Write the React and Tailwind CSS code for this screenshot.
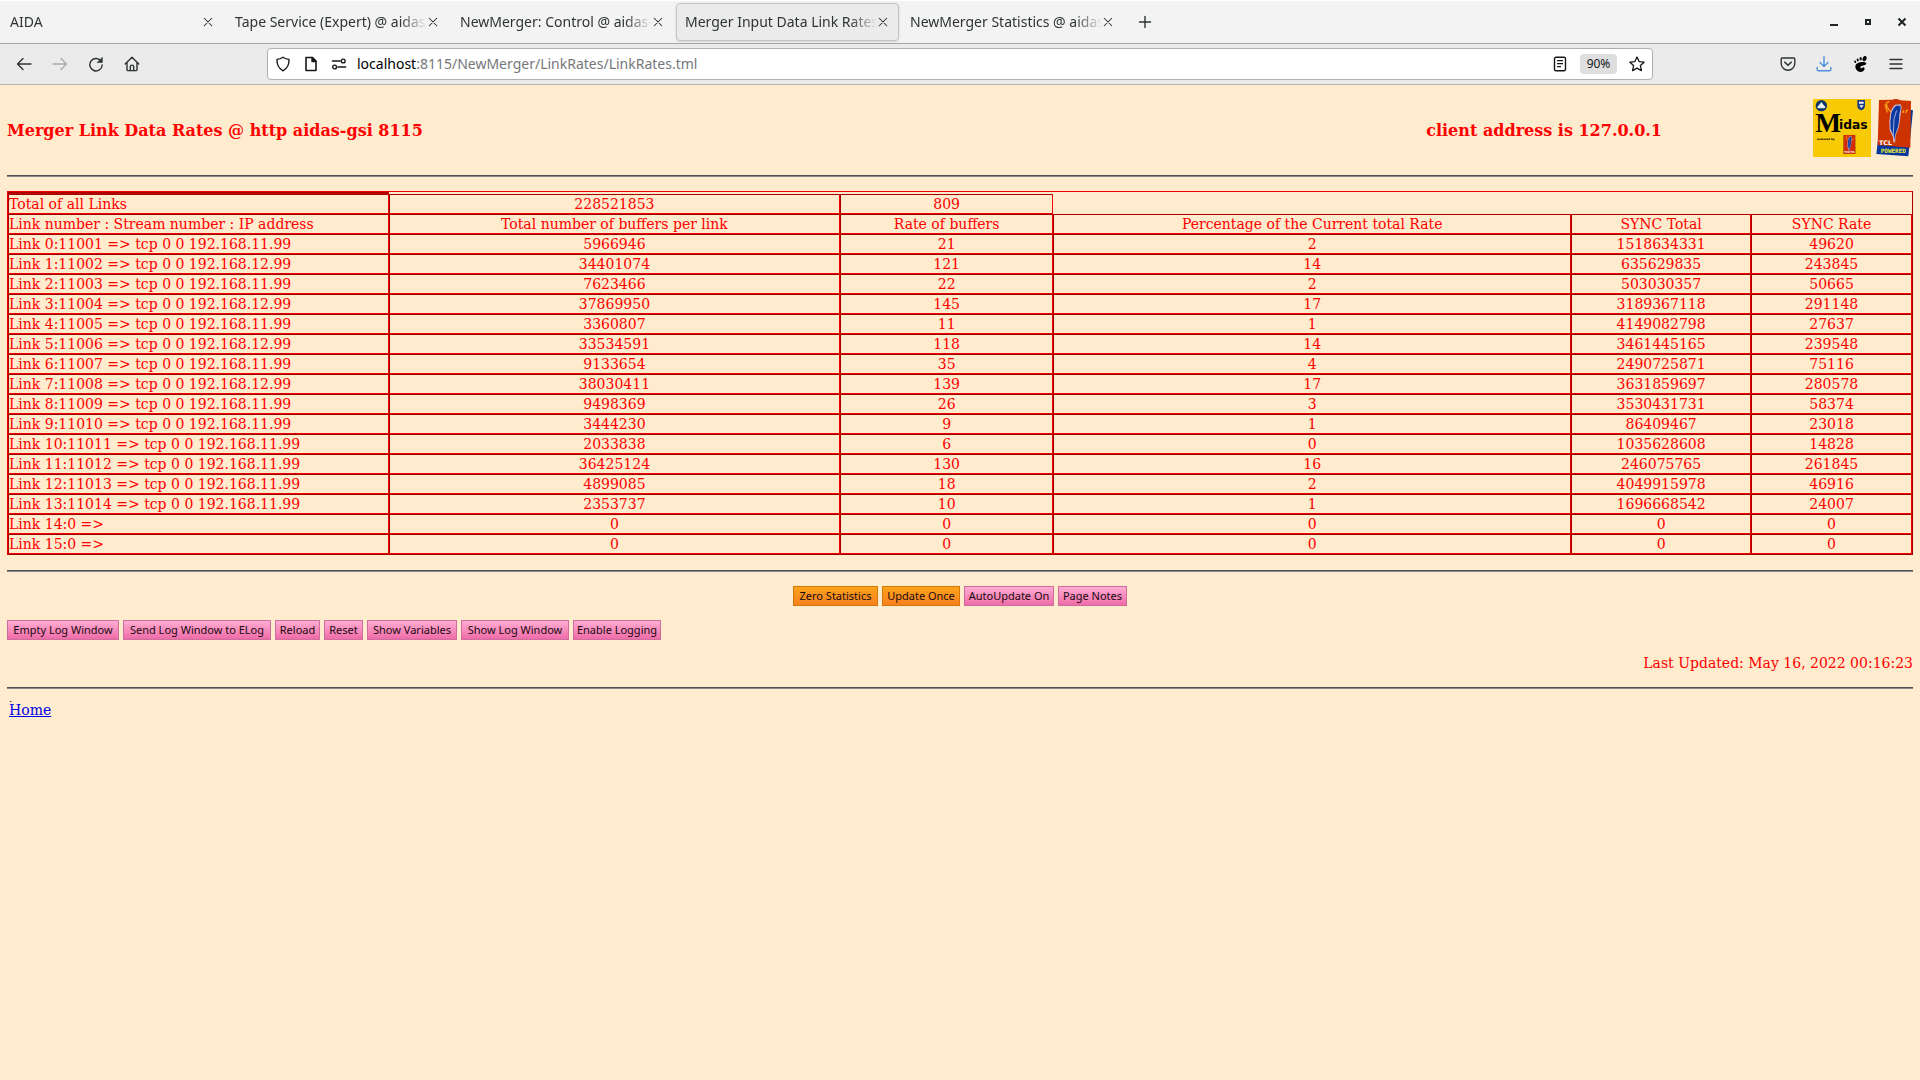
import React from "react";

const tabs = [
  "AIDA",
  "Tape Service (Expert) @ aidas",
  "NewMerger: Control @ aidas-",
  "Merger Input Data Link Rates",
  "NewMerger Statistics @ aidas",
];
const ACTIVE_TAB = 3;

const links = [
  ["Link 0:11001 => tcp 0 0 192.168.11.99", 5966946, 21, 2, 1518634331, 49620],
  ["Link 1:11002 => tcp 0 0 192.168.12.99", 34401074, 121, 14, 635629835, 243845],
  ["Link 2:11003 => tcp 0 0 192.168.11.99", 7623466, 22, 2, 503030357, 50665],
  ["Link 3:11004 => tcp 0 0 192.168.12.99", 37869950, 145, 17, 3189367118, 291148],
  ["Link 4:11005 => tcp 0 0 192.168.11.99", 3360807, 11, 1, 4149082798, 27637],
  ["Link 5:11006 => tcp 0 0 192.168.12.99", 33534591, 118, 14, 3461445165, 239548],
  ["Link 6:11007 => tcp 0 0 192.168.11.99", 9133654, 35, 4, 2490725871, 75116],
  ["Link 7:11008 => tcp 0 0 192.168.12.99", 38030411, 139, 17, 3631859697, 280578],
  ["Link 8:11009 => tcp 0 0 192.168.11.99", 9498369, 26, 3, 3530431731, 58374],
  ["Link 9:11010 => tcp 0 0 192.168.11.99", 3444230, 9, 1, 86409467, 23018],
  ["Link 10:11011 => tcp 0 0 192.168.11.99", 2033838, 6, 0, 1035628608, 14828],
  ["Link 11:11012 => tcp 0 0 192.168.11.99", 36425124, 130, 16, 246075765, 261845],
  ["Link 12:11013 => tcp 0 0 192.168.11.99", 4899085, 18, 2, 4049915978, 46916],
  ["Link 13:11014 => tcp 0 0 192.168.11.99", 2353737, 10, 1, 1696668542, 24007],
  ["Link 14:0 =>", 0, 0, 0, 0, 0],
  ["Link 15:0 =>", 0, 0, 0, 0, 0],
];

function Icon({ children, className = "size-4" }) {
  return (
    <svg viewBox="0 0 16 16" className={className} fill="none" stroke="currentColor" strokeWidth="1.4" strokeLinecap="round" strokeLinejoin="round" aria-hidden="true">
      {children}
    </svg>
  );
}

function ToolButton({ label, className = "text-[#2e3436]", children }) {
  return (
    <button type="button" aria-label={label} className={`flex h-8 w-9 items-center justify-center ${className}`}>
      {children}
    </button>
  );
}

function TabStrip() {
  return (
    <div className="flex h-11 items-center border-t border-b border-t-white border-b-[#a6a8a6] bg-[#f3f3f3]">
      {tabs.map((title, i) => (
        <div
          key={title}
          className={`mx-px flex h-[38px] w-[223px] items-center rounded border pl-2 ${
            i === ACTIVE_TAB ? "border-[#c2c3ca] bg-[#ebebeb] shadow-sm" : "border-transparent"
          }`}
        >
          <button
            type="button"
            className="w-48 text-left text-sm whitespace-nowrap text-[#2e3436] [mask-image:linear-gradient(to_right,black_86%,transparent)]"
          >
            {title}
          </button>
          <button type="button" aria-label="Close tab" className="flex h-5 w-3 items-center justify-center text-[#2e3436]">
            <Icon className="size-3">
              <path d="M3 3l10 10M13 3L3 13" />
            </Icon>
          </button>
        </div>
      ))}
      <button type="button" aria-label="New tab" className="ml-0.5 flex size-9 items-center justify-center text-[#2e3436]">
        <Icon>
          <path d="M8 2.500v11M2.500 8h11" />
        </Icon>
      </button>
      <div className="mr-px ml-auto flex text-[#1f2426]">
        <button type="button" aria-label="Minimize" className="flex h-8 w-[34px] items-center justify-center">
          <svg viewBox="0 0 16 16" className="size-4" aria-hidden="true"><path d="M4 10h8v2H4z" fill="currentColor" /></svg>
        </button>
        <button type="button" aria-label="Maximize" className="flex h-8 w-[34px] items-center justify-center">
          <svg viewBox="0 0 16 16" className="size-4" aria-hidden="true"><path d="M6 6h4v4H6z" fill="none" stroke="currentColor" strokeWidth="2" /></svg>
        </button>
        <button type="button" aria-label="Close window" className="flex h-8 w-[34px] items-center justify-center">
          <svg viewBox="0 0 16 16" className="size-4" aria-hidden="true"><path d="M4.500 4.500l7 7M11.500 4.500l-7 7" stroke="currentColor" strokeWidth="2" /></svg>
        </button>
      </div>
    </div>
  );
}

function Toolbar() {
  return (
    <div className="flex h-[41px] items-center border-b border-[#b6b6b2] bg-[#ebebeb] px-1.5">
      <ToolButton label="Back">
        <Icon><path d="M15 8H1.500M7 2.500L1.500 8 7 13.500" /></Icon>
      </ToolButton>
      <ToolButton label="Forward" className="text-[#a9abac]">
        <Icon><path d="M1 8h13.500M9 2.500L14.500 8 9 13.500" /></Icon>
      </ToolButton>
      <ToolButton label="Reload">
        <Icon>
          <path d="M13.300 5.500A6.200 6.200 0 1 0 14.200 9" />
          <path d="M14.300 1.600v4.900H9.400z" fill="currentColor" strokeWidth="0.6" />
        </Icon>
      </ToolButton>
      <ToolButton label="Home">
        <Icon>
          <path d="M1.200 8L8 1.300 14.800 8M3 6.500v7.200c0 .6.300.9.900.9h8.200c.6 0 .9-.3.900-.9V6.500" />
          <path d="M6.300 14.500v-3.700c0-1.100.6-1.700 1.700-1.700s1.700.6 1.700 1.700v3.700" />
        </Icon>
      </ToolButton>
      <div className="ml-[117px] flex h-8 flex-1 items-center rounded border border-[#b0b1ae] bg-white pl-[7px] text-[#15171a]">
        <Icon>
          <path d="M8 1.200c1.800 1.300 3.800 2 6 2.200.3 5.300-1.700 9-6 11.400C3.700 12.400 1.700 8.700 2 3.400c2.200-.2 4.200-.9 6-2.200z" />
        </Icon>
        <Icon className="ml-3 size-4">
          <path d="M3 1.500h6.500L13 5v9c0 .4-.1.500-.5.500h-9c-.4 0-.5-.1-.5-.5z" strokeWidth="1.600" />
          <path d="M9 1.500V5.500h4z" fill="currentColor" />
        </Icon>
        <Icon className="ml-3 size-4">
          <path d="M1.500 5h7.500M7 11h7.500" strokeWidth="1.600" />
          <circle cx="12.200" cy="5" r="1.900" />
          <circle cx="3.600" cy="11" r="1.900" />
        </Icon>
        <label htmlFor="url" className="ml-2.5 text-sm text-black">localhost</label>
        <input
          id="url"
          className="min-w-0 flex-1 bg-transparent text-sm text-[#75777a] outline-none"
          defaultValue=":8115/NewMerger/LinkRates/LinkRates.tml"
        />
        <button type="button" aria-label="Reader view" className="flex size-8 items-center justify-center">
          <Icon>
            <rect x="2.500" y="1.200" width="11" height="13.600" rx="1.500" />
            <path d="M5.500 4.700h5M5.500 7.700h5M5.500 10.700h3" strokeWidth="1.200" />
          </Icon>
        </button>
        <button type="button" className="mx-1 h-5 w-[37px] rounded-sm bg-[#dedede] text-center text-xs text-[#15171a]">90%</button>
        <button type="button" aria-label="Bookmark" className="flex h-8 w-[31px] items-center justify-center">
          <Icon>
            <path d="M8 1l2.100 4.600 5 .6-3.700 3.400 1 5L8 12.100l-4.400 2.500 1-5L.9 6.200l5-.6z" strokeWidth="1.300" />
          </Icon>
        </button>
      </div>
      <div className="ml-[117px] flex">
        <ToolButton label="Pocket">
          <Icon>
            <path d="M2.200 2h11.600c.6 0 1 .4 1 1v4.500a6.800 6.800 0 0 1-13.600 0V3c0-.6.400-1 1-1z" />
            <path d="M4.800 6.200L8 9.300l3.200-3.100" strokeWidth="1.600" />
          </Icon>
        </ToolButton>
        <ToolButton label="Downloads" className="text-[#4a90d9]">
          <Icon>
            <path d="M8 .8v9.500M4 6.500l4 4 4-4M1.200 11.500v2c0 .8.500 1.300 1.300 1.300h11c.8 0 1.300-.5 1.300-1.300v-2" />
          </Icon>
        </ToolButton>
        <ToolButton label="GNOME extensions" className="text-black">
          <svg viewBox="0 0 16 16" className="size-4" fill="currentColor" aria-hidden="true">
            <ellipse cx="12.600" cy="2.600" rx="1.900" ry="2.700" transform="rotate(20 12.600 2.600)" />
            <ellipse cx="8.700" cy="2.700" rx="1.100" ry="1.700" />
            <ellipse cx="5.700" cy="3.900" rx="1" ry="1.500" transform="rotate(-12 5.700 3.900)" />
            <ellipse cx="3.200" cy="5.700" rx=".9" ry="1.300" transform="rotate(-24 3.200 5.700)" />
            <path d="M12.800 6.200C9 5.500 3.800 6.900 3.400 10c-.3 2.900 2 6 5.200 6 2.300 0 4.300-1.800 3.900-3.700-.3-1.400-1.800-1-2.400-.4-.8.800-1.800.4-1.700-.6.200-2.200 5.600-1.500 5.800-3.500.1-.8-.5-1.400-1.400-1.600z" />
          </svg>
        </ToolButton>
        <ToolButton label="Menu">
          <Icon><path d="M2 3.500h12M2 8h12M2 12.500h12" /></Icon>
        </ToolButton>
      </div>
    </div>
  );
}

function Feather() {
  return (
    <>
      <path d="M57 17l17-1 3 9-3 20-3 25-4 20-8 18-2 26-6-20-10-20-1-26 3-26 6-15z" fill="#c9bcd4" />
      <path d="M60 20l13 0 1 8-4 18-1 20-4 22-7 18-4 18-4-20-6-14-1-20 3-28 7-14z" fill="#0a38a0" />
      <path d="M62 34L54 60l-2 44 1 26" fill="none" stroke="#e8e8f4" strokeWidth="2" />
      <path d="M27 16l7 24M40 7l-9 5 2 12 12 16M80 42l4-9M88 42l7-11" fill="none" stroke="#f8a018" strokeWidth="4" />
    </>
  );
}

function MidasLogo() {
  return (
    <svg viewBox="0 0 174 174" className="size-[58px]" role="img" aria-label="Midas">
      <path d="M0 0h174v174H0z" fill="#f8ca06" />
      <circle cx="25" cy="20" r="17" fill="#0d3566" />
      <path d="M12 25l8-9 5-7 5 7 8 9-4 3H16z" fill="#e8eef4" />
      <path d="M133 3h23v17c0 7-5 12-11 14-7-2-12-7-12-14z" fill="#173a86" />
      <path d="M138 8h14v6h-14zM139 19l6 8 7-8z" fill="#f4f4f4" />
      <text x="7" y="98" fontFamily="Liberation Serif" fontWeight="bold" fontSize="82">M</text>
      <text x="78" y="91" fontFamily="DejaVu Sans" fontWeight="bold" fontSize="37">idas</text>
      <text x="12" y="124" fontFamily="DejaVu Sans" fontWeight="bold" fontSize="8">powered by</text>
      <path d="M91 109l36-2 1 57-37 2z" fill="#9a5c0c" />
      <svg x="92" y="107" width="35" height="58" viewBox="9 3 96 143" preserveAspectRatio="none">
        <path d="M9 3l96 3-2 140-98-8z" fill="#d22c08" />
        <Feather />
      </svg>
      <text x="94" y="161" fill="#fff" fontFamily="DejaVu Sans" fontWeight="bold" fontSize="8">TCL/TK</text>
    </svg>
  );
}

function TclLogo() {
  return (
    <svg viewBox="0 0 111 174" className="h-[58px] w-[37px]" role="img" aria-label="TCL powered">
      <path d="M100 32l11 2-14 138L1 165l7-60z" fill="#06359c" />
      <path d="M9 3l40-1 12-3 12 5 32 2-2 140-98-8z" fill="#cc3300" />
      <Feather />
      <text x="9" y="139" fill="#fff" fontFamily="DejaVu Sans" fontWeight="bold" fontSize="19">TCL</text>
      <text x="14" y="163" fill="#f0f030" fontFamily="DejaVu Sans Mono" fontWeight="bold" fontSize="18">POWERED</text>
    </svg>
  );
}

function Rule({ className }) {
  return <hr className={`h-0.5 border-t border-b border-t-[#4d5254] border-b-[#85868a] ${className}`} />;
}

const cellStyle = "border border-t-[#a60000] border-l-[#a60000] border-r-[#f00000] border-b-[#f00000] px-0 py-px font-normal";

function Row({ values, head = false }) {
  const Cell = head ? "th" : "td";
  return (
    <tr>
      {values.map((v, i) => (
        <Cell key={i} className={`${cellStyle} ${i === 0 ? "text-left" : "text-center"}`}>
          {v}
        </Cell>
      ))}
    </tr>
  );
}

function LinkTable() {
  return (
    <table className="w-full table-fixed border-separate border-spacing-0 border border-t-[#f00000] border-l-[#f00000] border-r-[#a60000] border-b-[#a60000] leading-4">
      <colgroup>
        <col className="w-[20%]" />
        <col className="w-[23.7%]" />
        <col className="w-[11.2%]" />
        <col className="w-[27.2%]" />
        <col className="w-[9.45%]" />
        <col />
      </colgroup>
      <tbody>
        <tr>
          <td className="border border-t-[#a60000] border-b-[#c00000] border-l-[#a60000] border-r-[#f00000] p-0" />
        </tr>
        <Row values={["Total of all Links", 228521853, 809]} />
        <Row
          head
          values={[
            "Link number : Stream number : IP address",
            "Total number of buffers per link",
            "Rate of buffers",
            "Percentage of the Current total Rate",
            "SYNC Total",
            "SYNC Rate",
          ]}
        />
        {links.map((r) => (
          <Row key={r[0]} values={r} />
        ))}
      </tbody>
    </table>
  );
}

const BTN = "h-5 border text-[11px] leading-4 whitespace-nowrap text-[#1a0a10] bg-linear-to-b";
const PINK = "border-[#cf6d9c] from-[#ffacd2] to-[#ee6ba8]";
const ORANGE = "border-[#d97706] from-[#fba31c] to-[#f77f1e]";

function ActionButton({ label, tone = PINK, width }) {
  return (
    <button type="button" className={`${BTN} ${tone} ${width} font-[Noto_Sans,sans-serif]`}>
      {label}
    </button>
  );
}

export default function App() {
  return (
    <div className="min-h-screen bg-[#ffebcd]">
      <header className="font-[Noto_Sans,sans-serif]">
        <TabStrip />
        <Toolbar />
      </header>
      <main className="px-[7px] pt-3 font-[DejaVu_Serif,serif] text-[14px] text-[#ff0000]">
        <div className="flex h-[62px] items-center">
          <h1 className="pt-1.5 text-[16px] font-bold">Merger Link Data Rates @ http aidas-gsi 8115</h1>
          <p className="mr-[151px] ml-auto pt-1.5 text-[16px] font-bold">client address is 127.0.0.1</p>
          <div className="flex gap-[5px]">
            <MidasLogo />
            <TclLogo />
          </div>
        </div>
        <Rule className="mt-4 mb-3.5" />
        <LinkTable />
        <Rule className="mt-[15px] mb-3.5" />
        <div className="flex justify-center gap-1">
          <ActionButton label="Zero Statistics" tone={ORANGE} width="w-[85px]" />
          <ActionButton label="Update Once" tone={ORANGE} width="w-[78px]" />
          <ActionButton label="AutoUpdate On" width="w-[90px]" />
          <ActionButton label="Page Notes" width="w-[69px]" />
        </div>
        <div className="mt-3.5 flex gap-1">
          <ActionButton label="Empty Log Window" width="w-[112px]" />
          <ActionButton label="Send Log Window to ELog" width="w-[148px]" />
          <ActionButton label="Reload" width="w-[45px]" />
          <ActionButton label="Reset" width="w-[39px]" />
          <ActionButton label="Show Variables" width="w-[90px]" />
          <ActionButton label="Show Log Window" width="w-[108px]" />
          <ActionButton label="Enable Logging" width="w-[88px]" />
        </div>
        <p className="mt-3.5 text-right leading-[18px]">Last Updated: May 16, 2022 00:16:23</p>
        <Rule className="mt-[15px] mb-2" />
        <p className="px-0.5 text-[10px] leading-[4px] text-black">.</p>
        <p className="px-0.5 leading-[18px]">
          <a href="#home" className="text-[#0000ee] underline">Home</a>
        </p>
      </main>
    </div>
  );
}
